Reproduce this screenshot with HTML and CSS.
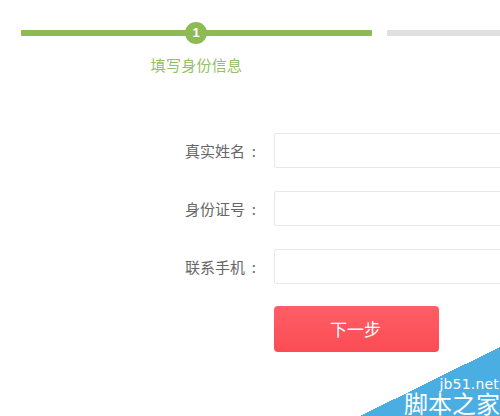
FILE: index.html
```html
<!DOCTYPE html>
<html lang="zh">
<head>
<meta charset="utf-8">
<title>填写身份信息</title>
<link rel="stylesheet" href="styles.css">
</head>
<body>
<div class="page">
  <div class="steps">
    <div class="step step-active">
      <div class="track"><span class="dot">1</span></div>
      <div class="step-label">填写身份信息</div>
    </div>
    <div class="step step-todo">
      <div class="track"></div>
    </div>
  </div>
  <form class="form">
    <div class="row"><label class="label">真实姓名&nbsp;&nbsp;:</label><input class="field" type="text"></div>
    <div class="row"><label class="label">身份证号&nbsp;&nbsp;:</label><input class="field" type="text"></div>
    <div class="row"><label class="label">联系手机&nbsp;&nbsp;:</label><input class="field" type="text"></div>
    <div class="actions"><button class="next" type="button">下一步</button></div>
  </form>
</div>
<div class="mark">
  <div class="mark-url">jb51.net</div>
  <div class="mark-name">脚本之家</div>
</div>
</body>
</html>
```
FILE: styles.css
```css
* { box-sizing: border-box; }
html, body { margin: 0; height: 416px; overflow: hidden; background: #fff; }
body { font-family: "Noto Sans CJK SC", "Liberation Sans", sans-serif; position: relative; }
.page { width: 500px; height: 416px; overflow: hidden; }

.steps { display: flex; gap: 15px; padding: 22px 0 0 21px; }
.step { flex: none; }
.step-active { width: 351px; }
.step-todo { width: 300px; }
.track { position: relative; height: 6px; margin-top: 8px; background: #8cbb52; border-radius: 1px; }
.step-todo .track { background: #e0e0e0; }
.dot {
  position: absolute; left: 164px; top: -8px;
  width: 22px; height: 22px; border-radius: 50%;
  background: #8cbb52; color: #fff;
  font: bold 13px/22px "Liberation Sans", sans-serif; text-align: center;
}
.step-label {
  margin-top: 18px; text-align: center; color: #94bf64;
  font-size: 15px; line-height: 22px; letter-spacing: .3px;
}

.form { display: flex; flex-direction: column; gap: 23px; margin-top: 57px; }
.row { display: flex; align-items: center; }
.label {
  flex: none; width: 274px; padding-right: 18px; text-align: right;
  color: #666; font-size: 15px; line-height: 34px; white-space: nowrap;
}
.field {
  flex: none; width: 300px; height: 35px;
  border: 1px solid #e8e8e8; border-radius: 2px; background: #fff; outline: 0;
}
.actions { padding-left: 274px; margin-top: -1px; }
.next {
  display: block; width: 165px; height: 46px; padding: 0 2px 2px 0;
  border: 0; border-radius: 4px; color: #fff;
  background: linear-gradient(#ff5e66, #fb4c54);
  font-family: inherit; font-size: 17px;
}

.mark {
  position: absolute; right: 0; bottom: 0; width: 140px; height: 69px;
  background: linear-gradient(to bottom right, transparent 50%, #4aaee3 50%);
  color: #fff; text-align: right;
}
.mark-url {
  margin-top: 30px; font: 14px/15px "DejaVu Sans", sans-serif;
  letter-spacing: .2px; padding-right: 1px;
}
.mark-name { font-size: 24px; line-height: 22px; white-space: nowrap; }
```
